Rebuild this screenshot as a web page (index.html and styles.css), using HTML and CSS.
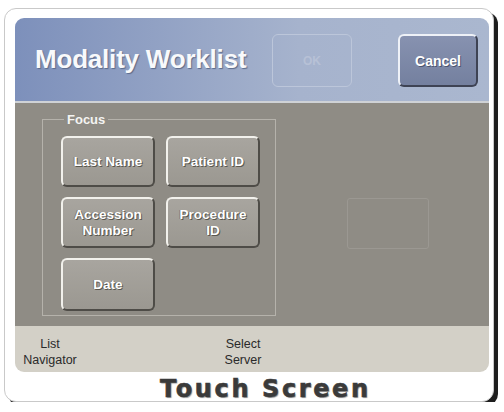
FILE: index.html
```html
<!DOCTYPE html>
<html lang="en">
  <head>
    <meta charset="UTF-8" />
    <link rel="stylesheet" href="styles.css">
  </head>
  <body>
    <div class="device">
      <div class="screen">
        <div class="header">
          <h1 class="title">Modality Worklist</h1>
          <button class="head-btn ok" disabled>OK</button>
          <button class="head-btn cancel">Cancel</button>
        </div>

        <div class="content">
          <fieldset class="focus">
            <legend>Focus</legend>
            <div class="focus-grid">
              <button class="key">Last Name</button>
              <button class="key">Patient ID</button>
              <button class="key">Accession<br>Number</button>
              <button class="key">Procedure<br>ID</button>
              <button class="key">Date</button>
            </div>
          </fieldset>
          <div class="ghost"></div>
        </div>

        <div class="footer">
          <div class="foot-item">List<br>Navigator</div>
          <div class="foot-item second">Select<br>Server</div>
        </div>
      </div>
      <div class="caption">Touch Screen</div>
    </div>
  </body>
</html>
```

FILE: styles.css
```css
body {
  margin: 0;
  background: #fff;
  font-family: "Liberation Sans", Arial, sans-serif;
}
.device {
  margin: 8px 0 0 4px;
  width: 490px;
  height: 394px;
  box-sizing: border-box;
  padding: 9px 0 0 10px;
  background: #fff;
  border: 1px solid #c9c9c9;
  border-radius: 12px;
  box-shadow: 4px 4px 0 #1e1e1e;
}
.screen {
  width: 474px;
  border-radius: 9px;
  overflow: hidden;
}
.header {
  height: 83px;
  display: flex;
  align-items: center;
  padding: 0 11px 0 20px;
  background: linear-gradient(to right, #7d90bb, #a6b3cd 60%, #aab7cf);
  border-bottom: 2px solid #cfd2d6;
}
.title {
  flex: 1;
  margin: 0;
  font-size: 26px;
  letter-spacing: -0.2px;
  font-weight: bold;
  color: #f8f9fb;
  text-shadow: 1px 1px 1px #5c6a8a;
}
.head-btn {
  width: 80px;
  height: 53px;
  margin-top: 2px;
  font-family: inherit;
  font-weight: bold;
  border-radius: 6px;
}
.ok {
  margin-right: 46px;
  background: transparent;
  border: 1px solid #bcc6da;
  color: #b7c1d6;
  font-size: 12px;
}
.cancel {
  background: linear-gradient(#8792b0, #74809f);
  border: 2px solid;
  border-color: #eef1f7 #3e4354 #3e4354 #eef1f7;
  color: #fff;
  font-size: 14px;
  text-shadow: 1px 1px 0 #4b5570;
}
.content {
  height: 223px;
  display: flex;
  align-items: flex-start;
  background: #8f8c85;
}
.focus {
  margin: 9px 0 0 27px;
  width: 234px;
  box-sizing: border-box;
  padding: 9px 15px 6px 18px;
  border: 1px solid #b5b2ab;
}
.focus legend {
  margin-left: 3px;
  padding: 0 3px;
  font-size: 13px;
  font-weight: bold;
  color: #f4f4f2;
}
.focus-grid {
  display: grid;
  grid-template-columns: 94px 94px;
  grid-auto-rows: 51px;
  column-gap: 11px;
  row-gap: 10px;
}
.key {
  font-family: inherit;
  font-size: 13.5px;
  font-weight: bold;
  line-height: 16px;
  color: #fff;
  text-shadow: 1px 1px 0 #59574f, -1px 0 0 #7c7a73;
  background: linear-gradient(#a8a59f, #9b9891);
  border: 2px solid;
  border-color: #f2f1ec #4e4c47 #4e4c47 #f2f1ec;
  border-radius: 6px;
  padding: 0;
}
.key:last-child {
  height: 53px;
}
.ghost {
  margin: 95px 0 0 71px;
  width: 80px;
  height: 49px;
  border: 1px solid #9b9892;
  border-radius: 3px;
}
.footer {
  height: 46px;
  box-sizing: border-box;
  padding-top: 10px;
  display: flex;
  background: #d3d0c7;
}
.foot-item {
  width: 70px;
  text-align: center;
  font-size: 12.5px;
  line-height: 16px;
  color: #2a2a2a;
}
.foot-item.second {
  margin-left: 123px;
}
.caption {
  margin-top: 3px;
  padding-left: 145px;
  font-family: "DejaVu Sans", sans-serif;
  font-size: 24px;
  font-weight: bold;
  letter-spacing: 2.6px;
  color: #3a3a3a;
  -webkit-text-stroke: 0.6px #3a3a3a;
  text-shadow: 1px 1px 1px #999;
}
```
